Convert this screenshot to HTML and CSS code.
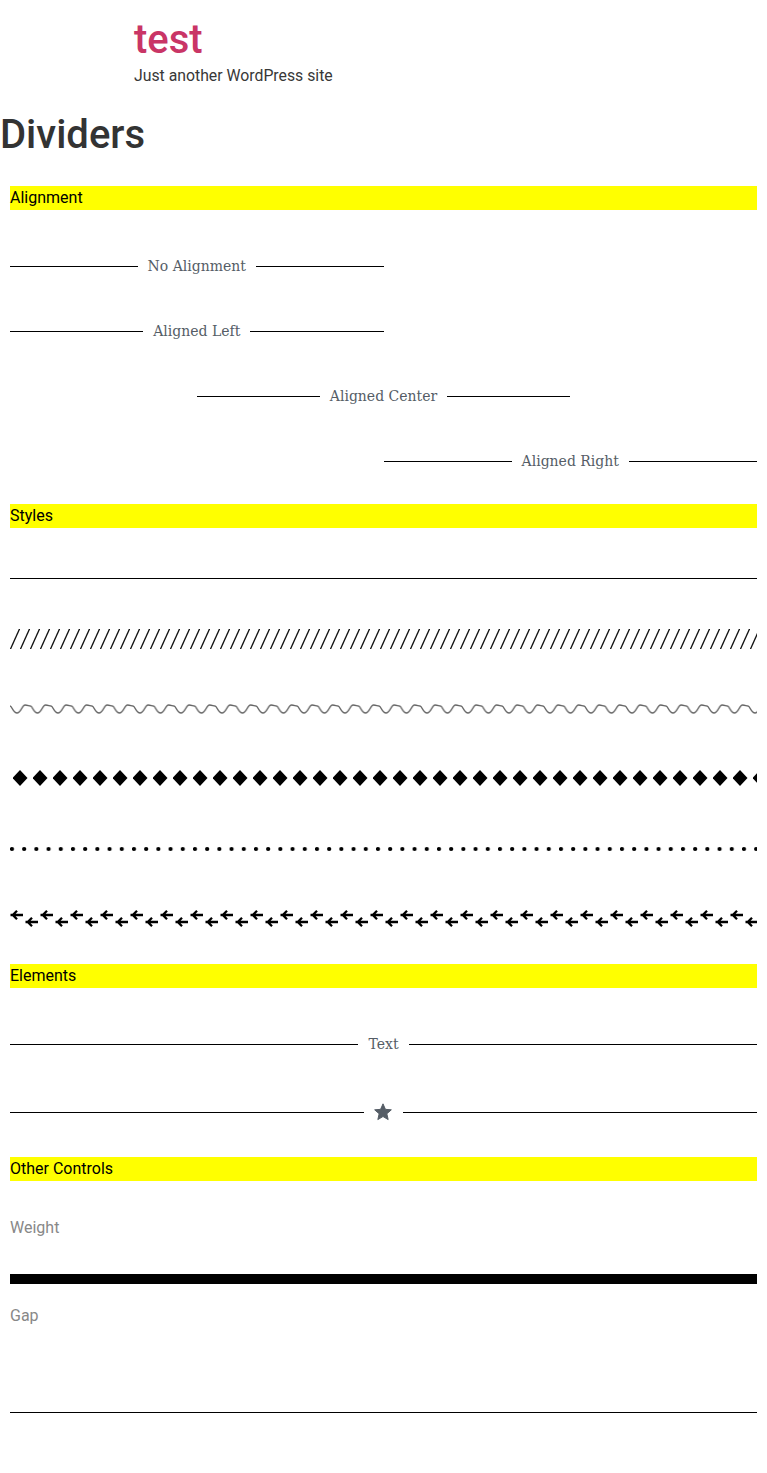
FILE: index.html
```html
<!DOCTYPE html>
<html lang="en">
<head>
<meta charset="utf-8">
<title>Dividers – test</title>
<link rel="stylesheet" href="styles.css">
</head>
<body>
<header class="site-header">
  <p class="site-title">test</p>
  <p class="site-desc">Just another WordPress site</p>
</header>
<h1 class="page-title">Dividers</h1>
<main class="content">
  <h2 class="bar">Alignment</h2>
  <div class="align-list">
    <div class="divider half"><span class="label">No Alignment</span></div>
    <div class="divider half"><span class="label">Aligned Left</span></div>
    <div class="divider half center"><span class="label">Aligned Center</span></div>
    <div class="divider half right"><span class="label">Aligned Right</span></div>
  </div>

  <h2 class="bar">Styles</h2>
  <div class="styles-list">
    <div class="solid"></div>
    <svg class="pat slashes" width="100%" height="20">
      <defs>
        <pattern id="p-slash" width="10" height="20" patternUnits="userSpaceOnUse">
          <line x1="0.3" y1="20.5" x2="9.7" y2="-0.5" stroke="#111" stroke-width="1.3"/>
        </pattern>
      </defs>
      <rect width="100%" height="20" fill="url(#p-slash)"/>
    </svg>
    <svg class="pat wavy" width="100%" height="14">
      <defs>
        <pattern id="p-wave" width="20.5" height="14" patternUnits="userSpaceOnUse">
          <path d="M0 4 C2 4 3 11 7 11 C11 11 12 3 15 3 C18 3 18.5 4 20.5 4" fill="none" stroke="#666" stroke-width="1.3"/>
        </pattern>
      </defs>
      <rect width="100%" height="14" fill="url(#p-wave)"/>
    </svg>
    <svg class="pat diamonds" width="100%" height="20">
      <defs>
        <pattern id="p-dia" x="3" width="20" height="20" patternUnits="userSpaceOnUse">
          <polygon points="7,2 14.5,10 7,18 -0.5,10" fill="#000"/>
        </pattern>
      </defs>
      <rect width="100%" height="20" fill="url(#p-dia)"/>
    </svg>
    <svg class="pat dots" width="100%" height="6">
      <defs>
        <pattern id="p-dot" width="12.2" height="6" patternUnits="userSpaceOnUse">
          <circle cx="2" cy="3" r="2.1" fill="#000"/>
        </pattern>
      </defs>
      <rect width="100%" height="6" fill="url(#p-dot)"/>
    </svg>
    <svg class="pat arrows" width="100%" height="18">
      <defs>
        <pattern id="p-arrow" width="30" height="18" patternUnits="userSpaceOnUse">
          <path d="M0.5 6 H13 M7 1.8 L2.8 6 L7 10.2" fill="none" stroke="#000" stroke-width="2.3"/>
          <path d="M15.5 13 H28 M22 8.8 L17.8 13 L22 17.2" fill="none" stroke="#000" stroke-width="2.3"/>
        </pattern>
      </defs>
      <rect width="100%" height="18" fill="url(#p-arrow)"/>
    </svg>
  </div>

  <h2 class="bar">Elements</h2>
  <div class="elements-list">
    <div class="divider"><span class="label">Text</span></div>
    <div class="divider star-div">
      <span class="icon">
        <svg width="20" height="20" viewBox="0 0 24 24"><path d="M12 2.2l2.9 6.6 7.1.6-5.4 4.7 1.6 7-6.2-3.7-6.2 3.7 1.6-7L2 9.4l7.1-.6z" fill="#555d66" stroke="#555d66" stroke-width="1.2" stroke-linejoin="round"/></svg>
      </span>
    </div>
  </div>

  <h2 class="bar">Other Controls</h2>
  <div class="controls-list">
    <p class="ctl-label">Weight</p>
    <div class="thick"></div>
    <p class="ctl-label gap-label">Gap</p>
    <div class="solid gap-line"></div>
  </div>
</main>
</body>
</html>
```

FILE: styles.css
```css
html, body {
  margin: 0;
  padding: 0;
  background: #fff;
}
body {
  font-family: Roboto, "Noto Sans", sans-serif;
  color: #333;
}
.site-header {
  padding: 16px 0 0 134px;
}
.site-title {
  margin: 0;
  font-size: 40px;
  line-height: 48px;
  color: #c93566;
  font-weight: 500;
}
.site-desc {
  margin: 2px 0 0;
  font-size: 15.8px;
  line-height: 20px;
  color: #383838;
}
.page-title {
  margin: 25px 0 0;
  font-size: 40px;
  line-height: 48px;
  font-weight: 500;
  color: #333;
}
.content {
  padding: 27px 10px 60px;
}
.bar {
  margin: 0;
  background: #ffff00;
  font-size: 16px;
  line-height: 24px;
  font-weight: 400;
  color: #000;
}
.divider {
  display: flex;
  align-items: center;
  height: 20px;
}
.divider::before,
.divider::after {
  content: "";
  flex: 1;
  border-top: 1px solid #000;
}
.divider .label {
  padding: 0 10px;
  font-family: "DejaVu Serif", serif;
  font-size: 14px;
  color: #555d66;
  white-space: nowrap;
}
.divider.half {
  width: 50%;
}
.divider.center {
  margin: 0 auto;
}
.divider.right {
  margin-left: auto;
}
.align-list {
  display: flex;
  flex-direction: column;
  gap: 45px;
  padding: 46px 0 33px;
}
.styles-list {
  display: flex;
  flex-direction: column;
  padding: 50px 0 37px;
}
.pat {
  display: block;
}
.solid {
  height: 0;
  border-top: 1px solid #000;
}
.slashes { margin-top: 50px; }
.wavy { margin-top: 53px; }
.diamonds { margin-top: 52px; }
.dots { margin-top: 58px; }
.arrows { margin-top: 57px; }
.elements-list {
  display: flex;
  flex-direction: column;
  padding: 46px 0 35px;
  gap: 48px;
}
.star-div .icon {
  display: flex;
  padding: 0 10px 0 9px;
}
.controls-list {
  display: flex;
  flex-direction: column;
  padding-top: 37px;
}
.ctl-label {
  margin: 0;
  font-size: 16px;
  line-height: 20px;
  color: #888;
}
.thick {
  height: 10px;
  background: #000;
  margin-top: 36px;
}
.gap-label {
  margin-top: 22px;
}
.gap-line {
  margin-top: 86px;
}
```
